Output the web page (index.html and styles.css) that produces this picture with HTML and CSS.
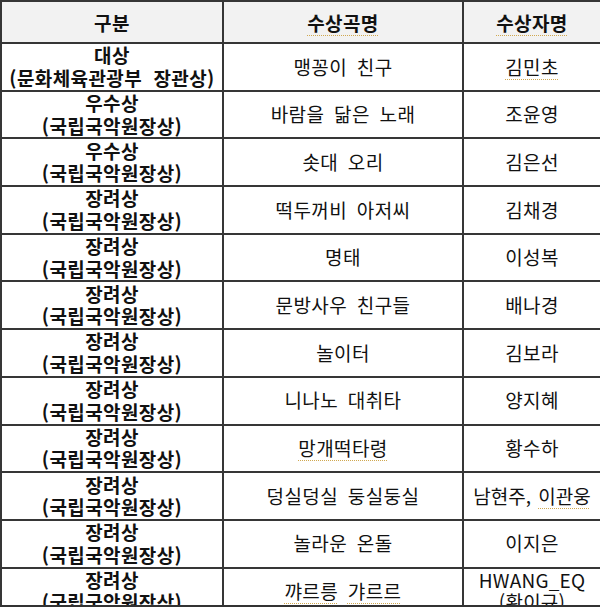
FILE: index.html
```html
<!DOCTYPE html>
<html lang="ko">
<head>
<meta charset="utf-8">
<link rel="stylesheet" href="styles.css">
</head>
<body>
<div class="frame">
<table class="awards">
  <colgroup>
    <col class="c1"><col class="c2"><col class="c3">
  </colgroup>
  <thead>
    <tr class="head">
      <th>구분</th>
      <th><span class="sp">수상곡명</span></th>
      <th><span class="sp">수상자명</span></th>
    </tr>
  </thead>
  <tbody>
    <tr><td class="cat">대상<br>(문화체육관광부&nbsp; 장관상)</td><td>맹꽁이 친구</td><td><span class="sp">김민초</span></td></tr>
    <tr><td class="cat">우수상<br>(국립국악원장상)</td><td>바람을 닮은 노래</td><td>조윤영</td></tr>
    <tr><td class="cat">우수상<br>(국립국악원장상)</td><td>솟대 오리</td><td>김은선</td></tr>
    <tr><td class="cat">장려상<br>(국립국악원장상)</td><td>떡두꺼비 아저씨</td><td>김채경</td></tr>
    <tr><td class="cat">장려상<br>(국립국악원장상)</td><td>명태</td><td>이성복</td></tr>
    <tr><td class="cat">장려상<br>(국립국악원장상)</td><td>문방사우 친구들</td><td>배나경</td></tr>
    <tr><td class="cat">장려상<br>(국립국악원장상)</td><td>놀이터</td><td>김보라</td></tr>
    <tr><td class="cat">장려상<br>(국립국악원장상)</td><td>니나노 대취타</td><td>양지혜</td></tr>
    <tr><td class="cat">장려상<br>(국립국악원장상)</td><td><span class="sp">망개떡타령</span></td><td>황수하</td></tr>
    <tr><td class="cat">장려상<br>(국립국악원장상)</td><td>덩실덩실 둥실둥실</td><td class="tight">남현주, <span class="sp">이관웅</span></td></tr>
    <tr><td class="cat">장려상<br>(국립국악원장상)</td><td>놀라운 온돌</td><td>이지은</td></tr>
    <tr><td class="cat">장려상<br>(국립국악원장상)</td><td><span class="sp">꺄르릉</span> <span class="sp">갸르르</span></td><td class="two">HWANG_EQ<br>(<span class="sp">황이규</span>)</td></tr>
  </tbody>
</table>
</div>
</body>
</html>
```

FILE: styles.css
```css
html, body {
  margin: 0;
  padding: 0;
  background: #ffffff;
}

.frame {
  width: 600px;
  height: 607px;
  overflow: hidden;
  position: relative;
}

.frame::after {
  content: "";
  position: absolute;
  left: 0;
  right: 0;
  bottom: 0;
  height: 2px;
  background: #333333;
}

.awards {
  border-collapse: collapse;
  width: 600px;
  table-layout: fixed;
  font-family: "Noto Sans CJK KR", "Noto Sans", sans-serif;
  font-size: 19px;
  letter-spacing: 0.4px;
  color: #111111;
  word-spacing: 4px;
}

.c1 { width: 222px; }
.c2 { width: 240px; }
.c3 { width: 138px; }

.awards th,
.awards td {
  border: 2px solid #363636;
  text-align: center;
  vertical-align: middle;
  padding: 0;
  line-height: 22.5px;
}

.head {
  height: 42px;
}

.head th {
  background: #f2f2f2;
  font-weight: 700;
  padding-top: 2px;
}

tbody tr {
  height: 47.7px;
}

.cat {
  font-weight: 700;
  word-spacing: 0;
}

.tight {
  word-spacing: 2px;
  letter-spacing: 0;
}

.two {
  word-spacing: 0;
  letter-spacing: 0.2px;
  line-height: 21px;
}

.sp {
  text-decoration: underline dotted #d0a850;
  text-decoration-thickness: 1px;
  text-underline-offset: 4px;
}
```
